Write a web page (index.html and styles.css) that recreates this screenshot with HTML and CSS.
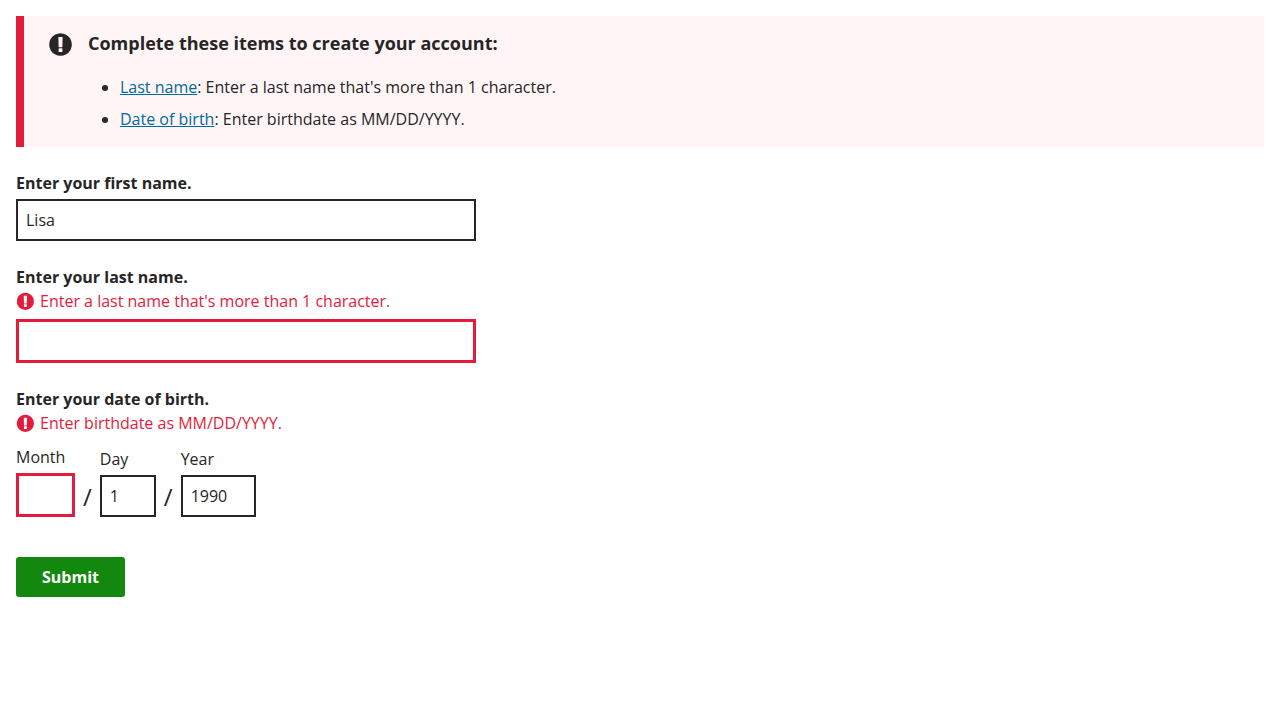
FILE: index.html
```html
<!DOCTYPE html>
<html lang="en">
<head>
<meta charset="utf-8">
<meta name="viewport" content="width=device-width, initial-scale=1">
<title>Create your account</title>
<link rel="stylesheet" href="styles.css">
</head>
<body>
<svg class="sprite" aria-hidden="true">
  <symbol id="alert" viewBox="-78 50 1624 1624">
    <path fill="currentColor" d="M768 128q209 0 385.500 103t279.500 279.500 103 385.500-103 385.500-279.500 279.500-385.500 103-385.500-103-279.500-279.500-103-385.500 103-385.500 279.500-279.500 385.500-103zM896 1374v-190q0-14-9-23.500t-22-9.500h-192q-13 0-23 10t-10 23v190q0 13 10 23t23 10h192q13 0 22-9.500t9-23.500zM894 1060l18-651q0-12-10-18-10-8-24-8h-220q-14 0-24 8-10 6-10 18l17 651q0 10 10 17.500t24 7.500h185q14 0 23.500-7.500t10.500-17.500z"/>
  </symbol>
</svg>
<form class="form" novalidate>
  <section class="alert" role="alert">
    <svg class="alert-icon" aria-hidden="true"><use href="#alert"/></svg>
    <div>
      <h1 class="alert-title">Complete these items to create your account:</h1>
      <ul class="alert-list">
        <li><a href="#last-name">Last name</a>: Enter a last name that's more than 1 character.</li>
        <li><a href="#month">Date of birth</a>: Enter birthdate as MM/DD/YYYY.</li>
      </ul>
    </div>
  </section>

  <div class="field">
    <label class="label" for="first-name">Enter your first name.</label>
    <input class="input" id="first-name" type="text" value="Lisa">
  </div>

  <div class="field">
    <label class="label" for="last-name">Enter your last name.</label>
    <p class="error" id="last-error"><svg class="error-icon" aria-hidden="true"><use href="#alert"/></svg>Enter a last name that's more than 1 character.</p>
    <input class="input invalid" id="last-name" type="text" aria-invalid="true" aria-describedby="last-error">
  </div>

  <fieldset class="field">
    <legend class="label">Enter your date of birth.</legend>
    <p class="error" id="date-error"><svg class="error-icon" aria-hidden="true"><use href="#alert"/></svg>Enter birthdate as MM/DD/YYYY.</p>
    <div class="date">
      <div class="part">
        <label for="month">Month</label>
        <input class="input two-digit invalid" id="month" type="text" inputmode="numeric" aria-invalid="true" aria-describedby="date-error">
      </div>
      <span class="slash">/</span>
      <div class="part">
        <label for="day">Day</label>
        <input class="input two-digit" id="day" type="text" inputmode="numeric" value="1">
      </div>
      <span class="slash">/</span>
      <div class="part">
        <label for="year">Year</label>
        <input class="input four-digit" id="year" type="text" inputmode="numeric" value="1990">
      </div>
    </div>
  </fieldset>

  <button class="submit" type="submit">Submit</button>
</form>
</body>
</html>
```
FILE: styles.css
```css
* {
  box-sizing: border-box;
}

body {
  margin: 0;
  padding: 16px;
  background: #fff;
  color: #262626;
  font: 400 16px/24px "Open Sans", "Noto Sans", sans-serif;
}

.sprite {
  display: none;
}

.alert {
  display: flex;
  gap: 16px;
  padding: 16px 16px 16px 24px;
  border-left: 8px solid #e31c3d;
  background: #fff5f6;
}

.alert-icon {
  flex: none;
  width: 24px;
  height: 24px;
}

.alert-title {
  margin: 0 0 20px;
  font-size: 18px;
  line-height: 23px;
  font-weight: 700;
}

.alert-list {
  margin: 0;
  padding-left: 32px;
}

.alert-list li + li {
  margin-top: 8px;
}

.alert-list a {
  color: #006a9c;
}

.field {
  display: block;
  min-width: 0;
  margin: 24px 0 0;
  padding: 0;
  border: 0;
}

.label {
  display: block;
  padding: 0;
  font-weight: 700;
}

.error {
  display: flex;
  align-items: center;
  gap: 6px;
  margin: 0;
  color: #e31c3d;
}

.error-icon {
  flex: none;
  width: 18px;
  height: 18px;
}

.input {
  display: block;
  width: 100%;
  max-width: 460px;
  height: 42px;
  margin-top: 4px;
  padding: 8px;
  border: 2px solid #262626;
  border-radius: 0;
  background: #fff;
  color: inherit;
  font: inherit;
}

.input.invalid {
  height: 44px;
  margin-top: 6px;
  border: 3px solid #e31c3d;
}

.date {
  display: flex;
  align-items: flex-end;
  gap: 8px;
  margin-top: 10px;
}

.date .input {
  margin-top: 4px;
}

.two-digit {
  width: 56px;
}

.two-digit.invalid {
  width: 59px;
}

.four-digit {
  width: 75px;
}

.slash {
  font-size: 24px;
  line-height: 40px;
}

.submit {
  display: block;
  margin-top: 40px;
  padding: 8px 26px;
  border: 0;
  border-radius: 3px;
  background: #12890e;
  color: #fff;
  font: 700 16px/24px "Open Sans", "Noto Sans", sans-serif;
}
```
